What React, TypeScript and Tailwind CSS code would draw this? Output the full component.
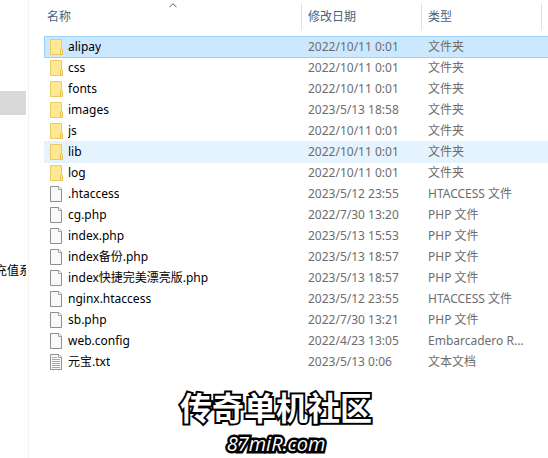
import clsx from "clsx";

type Kind = "folder" | "file" | "text";

type Entry = {
  name: string;
  date: string;
  type: string;
  kind: Kind;
  state?: "selected" | "hover";
};

const entries: Entry[] = [
  { name: "alipay", date: "2022/10/11 0:01", type: "文件夹", kind: "folder", state: "selected" },
  { name: "css", date: "2022/10/11 0:01", type: "文件夹", kind: "folder" },
  { name: "fonts", date: "2022/10/11 0:01", type: "文件夹", kind: "folder" },
  { name: "images", date: "2023/5/13 18:58", type: "文件夹", kind: "folder" },
  { name: "js", date: "2022/10/11 0:01", type: "文件夹", kind: "folder" },
  { name: "lib", date: "2022/10/11 0:01", type: "文件夹", kind: "folder", state: "hover" },
  { name: "log", date: "2022/10/11 0:01", type: "文件夹", kind: "folder" },
  { name: ".htaccess", date: "2023/5/12 23:55", type: "HTACCESS 文件", kind: "file" },
  { name: "cg.php", date: "2022/7/30 13:20", type: "PHP 文件", kind: "file" },
  { name: "index.php", date: "2023/5/13 15:53", type: "PHP 文件", kind: "file" },
  { name: "index备份.php", date: "2023/5/13 18:57", type: "PHP 文件", kind: "file" },
  { name: "index快捷完美漂亮版.php", date: "2023/5/13 18:57", type: "PHP 文件", kind: "file" },
  { name: "nginx.htaccess", date: "2023/5/12 23:55", type: "HTACCESS 文件", kind: "file" },
  { name: "sb.php", date: "2022/7/30 13:21", type: "PHP 文件", kind: "file" },
  { name: "web.config", date: "2022/4/23 13:05", type: "Embarcadero R...", kind: "file" },
  { name: "元宝.txt", date: "2023/5/13 0:06", type: "文本文档", kind: "text" },
];

const FolderIcon = () => (
  <svg width="13" height="16" viewBox="0 0 13 16" className="shrink-0">
    <path d="M.5.5h11v15H.5z" fill="#ffe793" stroke="#ebcb62" />
    <path d="M10.5 10.5q0-1 1-1t1 1v5h-2z" fill="#ffe793" stroke="#e6c252" />
  </svg>
);

const FileIcon = (props: { lines?: boolean }) => (
  <svg width="13" height="16" viewBox="0 0 13 16" className="shrink-0">
    <path d="M.5.5h8.5l2.5 2.5v12.500H.5z" fill="#f9f9f9" stroke="#8f8f8f" />
    <path d="M8.500.5v3h3" fill="#fff" stroke="#a0a0a0" />
    {props.lines && (
      <path d="M2 3.5h5M2 5.5h8M2 7.5h8M2 9.5h8M2 11.5h8M2 13.5h8" stroke="#a8a8a8" />
    )}
  </svg>
);

const HeaderCell = (props: { label: string; first?: boolean }) => (
  <th scope="col" className="h-9 p-0 align-top font-normal">
    <div
      className={clsx(
        "relative mt-[3px] flex h-[27px] items-center border-r border-[#e2e2e2] text-left",
        props.first ? "pl-[3px]" : "pl-[6px]"
      )}
    >
      {props.label}
      {props.first && (
        <svg
          width="8"
          height="5"
          viewBox="0 0 8 5"
          className="absolute inset-x-0 top-0 mx-auto"
        >
          <path d="M.5 4.200L4 .7l3.500 3.500" fill="none" stroke="#555" />
        </svg>
      )}
    </div>
  </th>
);

const Row = ({ entry }: { entry: Entry }) => (
  <tr
    className={clsx(
      "h-[21px]",
      entry.state === "selected" &&
        "bg-[#cce8ff] shadow-[inset_1px_1px_0_#99d1ff,0_1px_0_#99d1ff]",
      entry.state === "hover" && "bg-[#e5f3ff] shadow-[0_1px_0_#e5f3ff]"
    )}
  >
    <td className="p-0">
      <div className="flex items-center gap-[5px] pl-[6px] text-black">
        {entry.kind === "folder" ? <FolderIcon /> : <FileIcon lines={entry.kind === "text"} />}
        <span className="truncate">{entry.name}</span>
      </div>
    </td>
    <td className="p-0 pl-[6px]">{entry.date}</td>
    <td className="p-0 pl-[6px]">{entry.type}</td>
    <td className="p-0" />
  </tr>
);

const App = () => {
  return (
    <div className="flex min-h-screen bg-white font-['Noto_Sans','Noto_Sans_CJK_SC',sans-serif] text-[12px] leading-4 text-[#6d6d6d]">
      <aside className="w-[29px] shrink-0 border-r border-[#f3f3f3] pr-[2px] pt-[91px] text-black">
        <div className="h-6 bg-[#d9d9d9]" />
        <div className="mt-[148px] flex overflow-hidden">
          <span className="-ml-[5px] shrink-0 whitespace-nowrap">充值系</span>
        </div>
      </aside>

      <main className="min-w-0 flex-1 pl-[15px]">
        <table className="w-full table-fixed border-collapse whitespace-nowrap">
          <colgroup>
            <col />
            <col className="w-[120px]" />
            <col className="w-[120px]" />
            <col className="w-[6px]" />
          </colgroup>
          <thead className="text-[#4c607a]">
            <tr>
              <HeaderCell label="名称" first />
              <HeaderCell label="修改日期" />
              <HeaderCell label="类型" />
              <td className="p-0" />
            </tr>
          </thead>
          <tbody>
            {entries.map((entry) => (
              <Row key={entry.name} entry={entry} />
            ))}
          </tbody>
        </table>

        <div className="mt-4 flex flex-col items-center pr-10 text-white [paint-order:stroke_fill]">
          <p className="text-[32px] font-bold leading-10 [-webkit-text-stroke:4px_black]">
            传奇单机社区
          </p>
          <p className="mt-1 font-['Open_Sans',sans-serif] text-[20px] font-medium italic leading-6 [-webkit-text-stroke:5px_black]">
            87miR.com
          </p>
        </div>
      </main>
    </div>
  );
};

export default App;
